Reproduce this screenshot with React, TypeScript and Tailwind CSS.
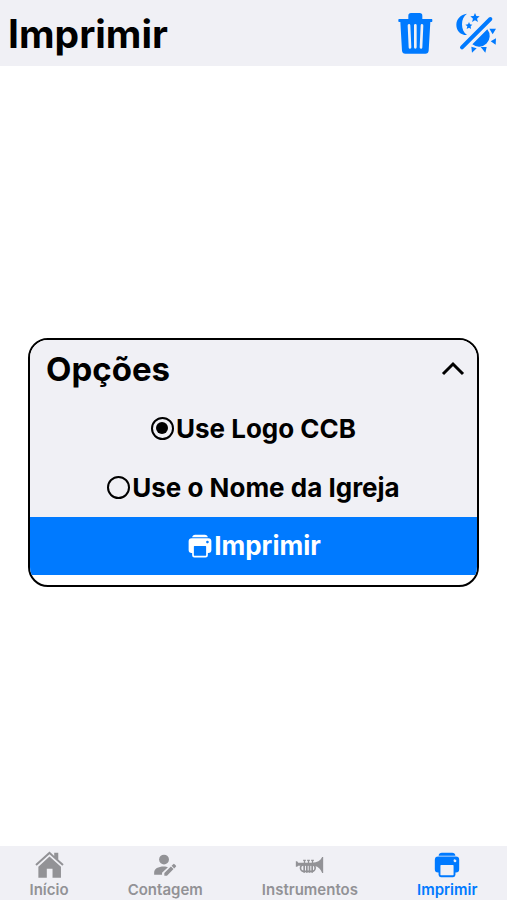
import { useState, type ReactNode } from "react";
import { IoPrint } from "react-icons/io5";

function TrashIcon() {
  return (
    <svg viewBox="0 0 108 132" className="h-11 w-9" fill="currentColor" aria-hidden="true">
      <path d="M34 24V14q0-8 8-8h26q8 0 8 8v10h28q2 0 2 3v3q0 3-2 3h-4l-5 86q-1 9-10 9H25q-9 0-10-9L10 33H6q-2 0-2-3v-3q0-3 2-3z" />
      <path
        d="M36 43l3 66M55 43v66M75 43l-3 66"
        stroke="#f0f0f5"
        strokeWidth="8"
        strokeLinecap="round"
      />
    </svg>
  );
}

function ThemeIcon() {
  return (
    <svg viewBox="205 30 126 132" className="h-11 w-[42px]" fill="currentColor" aria-hidden="true">
      <path d="M241 38C222 40 209 54 209 71c0 19 14 32 32 31-10-6-15-18-15-32 0-14 5-25 15-32z" />
      <path d="M265 36l4 9 10 1-8 7 3 10-9-5-9 5 3-10-8-7 10-1z" />
      <path d="M247 63l3 7 7 1-5 5 1 8-6-4-7 4 2-8-6-5 8-1z" />
      <path d="M226 139L311 54" stroke="currentColor" strokeWidth="12" strokeLinecap="round" />
      <path d="M302 85L257 130a32 32 0 0 0 45-45z" />
      <path d="M308 83l20 0-10 17zM312 121l16-9-1 19zM282 138l18 0-4 17zM254 137l16 5-14 13z" />
    </svg>
  );
}

function Chevron({ open }: { open: boolean }) {
  return (
    <svg
      viewBox="0 0 24 24"
      className={`size-6 ${open ? "" : "rotate-180"}`}
      fill="none"
      stroke="currentColor"
      strokeWidth="3"
      aria-hidden="true"
    >
      <path d="M2 17L12 7l10 10" />
    </svg>
  );
}

function HomeIcon() {
  return (
    <svg viewBox="106 36 86 82" className="h-7 w-[29px]" fill="currentColor" aria-hidden="true">
      <path d="M149 37l14 13v-9h12v20l16 14-4 4-38-34-38 34-4-4z" />
      <path d="M149 52l34 30v33h-25V88h-17v27h-25V82z" />
    </svg>
  );
}

function PersonEditIcon() {
  return (
    <svg viewBox="465 42 72 76" className="h-[25px] w-6" fill="currentColor" aria-hidden="true">
      <circle cx="498" cy="62" r="15" />
      <path d="M468 108v-7c0-11 12-18 30-18 5 0 8 1 12 2l-18 17v6z" />
      <path d="M499 111v-8l20-20 8 8-20 20zM521 81l5-5q2-2 4 0l4 4q2 2 0 4l-5 5z" />
    </svg>
  );
}

function TrumpetIcon() {
  return (
    <svg viewBox="138 53 86 54" className="h-[18px] w-[29px]" fill="currentColor" aria-hidden="true">
      <path d="M140 69h4l3 4h42c15 0 25-6 30-17h3v48h-3c-5-14-14-22-30-22h-42l-3 3h-4z" />
      <path d="M162 64h8v4h-8zM174 64h8v4h-8zM186 64h8v4h-8zM164 68h4v6h-4zM176 68h4v6h-4zM188 68h4v6h-4z" />
      <g fill="none" stroke="currentColor" strokeWidth="5">
        <rect x="154" y="79" width="44" height="20" rx="10" />
        <path d="M165 80v23M173 80v23M181 80v23M189 80v23" />
      </g>
    </svg>
  );
}

type Tab = { name: string; icon: ReactNode };

const tabs: Tab[] = [
  { name: "Início", icon: <HomeIcon /> },
  { name: "Contagem", icon: <PersonEditIcon /> },
  { name: "Instrumentos", icon: <TrumpetIcon /> },
  { name: "Imprimir", icon: <IoPrint size={30} /> },
];

const options = [
  { value: "logo", label: "Use Logo CCB" },
  { value: "name", label: "Use o Nome da Igreja" },
];

export default function App() {
  const [currentTab, setCurrentTab] = useState("Imprimir");
  const [selected, setSelected] = useState("logo");
  const [open, setOpen] = useState(true);

  return (
    <div className="flex min-h-screen flex-col bg-white font-['Inter',sans-serif] text-black">
      <header className="flex h-[66px] items-center justify-between bg-[#f0f0f5] pr-2.5 pl-2">
        <h1 className="text-[39px] leading-none font-bold">Imprimir</h1>
        <div className="flex items-center gap-[22px] text-[#007aff]">
          <button type="button" aria-label="Apagar">
            <TrashIcon />
          </button>
          <button type="button" aria-label="Alternar tema">
            <ThemeIcon />
          </button>
        </div>
      </header>

      <main className="flex flex-1 flex-col justify-center px-7 pt-3">
        <section className="overflow-hidden rounded-[20px] border-2 border-black bg-white pb-2.5">
          <button
            type="button"
            aria-expanded={open}
            className="flex h-[59px] w-full items-center justify-between bg-[#f0f0f5] pr-3 pl-4"
            onClick={() => setOpen(!open)}
          >
            <span className="text-[33px] leading-none font-bold">Opções</span>
            <Chevron open={open} />
          </button>
          {open && (
            <div className="bg-[#f0f0f5]">
              {options.map((item) => (
                <label
                  key={item.value}
                  className="flex h-[59px] items-center justify-center gap-0.5 text-[26px] font-bold"
                >
                  <input
                    type="radio"
                    name="option"
                    value={item.value}
                    checked={selected === item.value}
                    onChange={() => setSelected(item.value)}
                    className="grid size-[23px] shrink-0 appearance-none place-items-center rounded-full border-2 border-black before:size-3 before:rounded-full checked:before:bg-black"
                  />
                  {item.label}
                </label>
              ))}
            </div>
          )}
          <button
            type="button"
            className="flex h-[58px] w-full items-center justify-center bg-[#007aff] text-[26px] font-bold text-white"
          >
            <IoPrint size={28} />
            Imprimir
          </button>
        </section>
      </main>

      <nav className="flex h-[54px] justify-around bg-[#f0f0f5]">
        {tabs.map((item) => (
          <button
            key={item.name}
            type="button"
            className={`flex flex-col items-center text-[15px] leading-5 font-semibold ${
              item.name === currentTab ? "text-[#007aff]" : "text-[#929296]"
            }`}
            onClick={() => setCurrentTab(item.name)}
          >
            <span className="flex h-[35px] items-center pt-1">{item.icon}</span>
            {item.name}
          </button>
        ))}
      </nav>
    </div>
  );
}
